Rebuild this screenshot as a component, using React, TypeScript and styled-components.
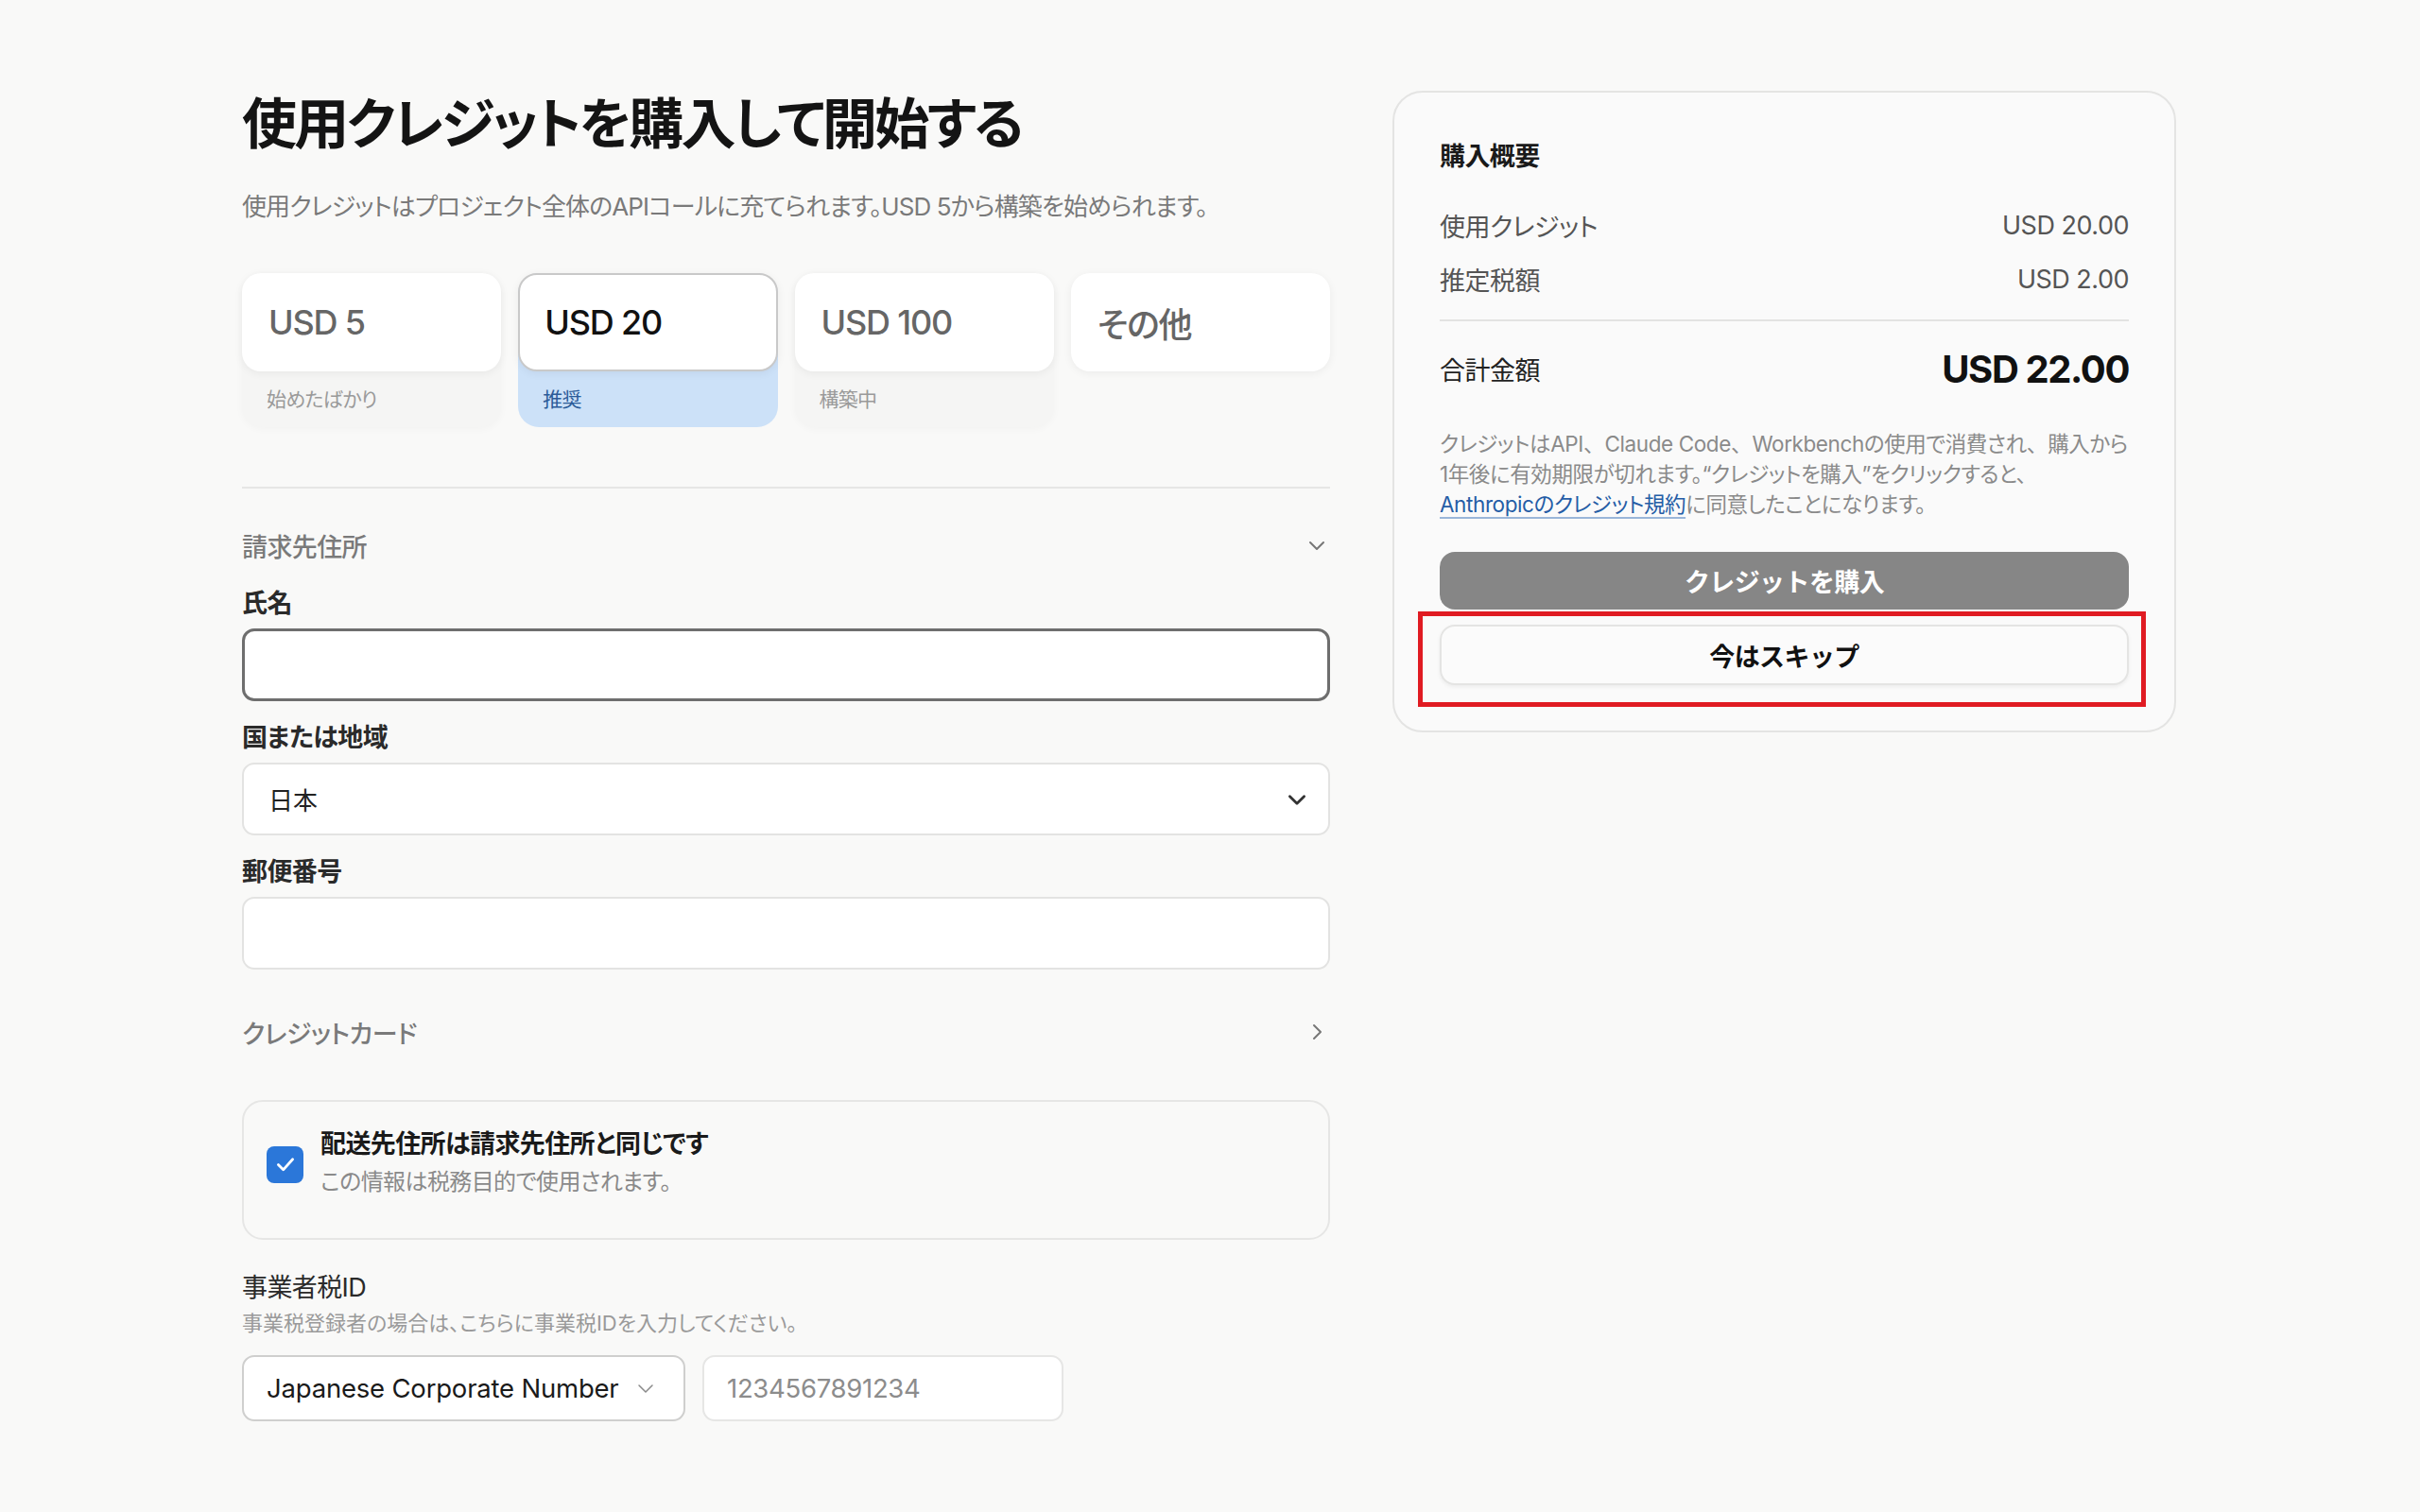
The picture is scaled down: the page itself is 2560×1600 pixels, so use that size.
import styled, { createGlobalStyle } from 'styled-components';

const GlobalStyle = createGlobalStyle`
	html, body {
		margin: 0;
		padding: 0;
		background: #f9f9f8;
	}
	body {
		font-family: Inter, "Noto Sans CJK JP", sans-serif;
		font-feature-settings: "palt";
		color: #1f1f1f;
	}
	* {
		box-sizing: border-box;
	}
`;

type Tier = {
	label: string;
	note?: string;
	selected?: boolean;
};

const tiers: Tier[] = [
	{ label: 'USD 5', note: '始めたばかり' },
	{ label: 'USD 20', note: '推奨', selected: true },
	{ label: 'USD 100', note: '構築中' },
	{ label: 'その他' },
];

const ChevronDown = ({ size = 22, color = '#777', width = 2 }: { size?: number; color?: string; width?: number }) => (
	<svg width={size} height={size} viewBox="0 0 24 24" fill="none">
		<polyline points="5,9 12,16 19,9" stroke={color} strokeWidth={width} strokeLinecap="round" strokeLinejoin="round" />
	</svg>
);

const ChevronRight = () => (
	<svg width={24} height={24} viewBox="0 0 24 24" fill="none">
		<polyline points="9,5 16,12 9,19" stroke="#777" strokeWidth={2} strokeLinecap="round" strokeLinejoin="round" />
	</svg>
);

const App = () => {
	return (
		<>
			<GlobalStyle />
			<Page>
				<Main>
					<Title>使用クレジットを購入して開始する</Title>
					<Subtitle>使用クレジットはプロジェクト全体のAPIコールに充てられます。USD 5から構築を始められます。</Subtitle>

					<TierGrid>
						{tiers.map(tier => (
							<TierTile key={tier.label} selected={tier.selected} empty={!tier.note}>
								<TierCard selected={tier.selected}>
									<TierLabel selected={tier.selected}>{tier.label}</TierLabel>
								</TierCard>
								{tier.note && <TierNote selected={tier.selected}>{tier.note}</TierNote>}
							</TierTile>
						))}
					</TierGrid>

					<Divider />

					<SectionRow>
						<SectionTitle>請求先住所</SectionTitle>
						<ChevronDown size={24} />
					</SectionRow>

					<FieldLabel>氏名</FieldLabel>
					<TextBox focused />

					<FieldLabel>国または地域</FieldLabel>
					<SelectBox>
						<span>日本</span>
						<ChevronDown size={26} color="#333" width={2.6} />
					</SelectBox>

					<FieldLabel>郵便番号</FieldLabel>
					<TextBox />

					<CardRow>
						<SectionTitle>クレジットカード</SectionTitle>
						<ChevronRight />
					</CardRow>

					<CheckCard>
						<CheckBox>
							<svg width={28} height={28} viewBox="0 0 24 24" fill="none">
								<polyline points="5.5,12.5 10,17 18.5,7.5" stroke="#fff" strokeWidth={2.4} strokeLinecap="round" strokeLinejoin="round" />
							</svg>
						</CheckBox>
						<CheckText>
							<CheckTitle>配送先住所は請求先住所と同じです</CheckTitle>
							<CheckNote>この情報は税務目的で使用されます。</CheckNote>
						</CheckText>
					</CheckCard>

					<TaxTitle>事業者税ID</TaxTitle>
					<TaxNote>事業税登録者の場合は、こちらに事業税IDを入力してください。</TaxNote>
					<TaxRow>
						<TaxSelect>
							<span>Japanese Corporate Number</span>
							<ChevronDown size={24} color="#8a8a8a" width={1.5} />
						</TaxSelect>
						<TaxInput>1234567891234</TaxInput>
					</TaxRow>
				</Main>

				<Summary>
					<SummaryTitle>購入概要</SummaryTitle>
					<SummaryLine>
						<span>使用クレジット</span>
						<span>USD 20.00</span>
					</SummaryLine>
					<SummaryLine tight>
						<span>推定税額</span>
						<span>USD 2.00</span>
					</SummaryLine>
					<SummaryDivider />
					<TotalLine>
						<span>合計金額</span>
						<TotalValue>USD 22.00</TotalValue>
					</TotalLine>
					<FinePrint>
						クレジットはAPI<Wide>、</Wide>Claude Code<Wide>、</Wide>Workbenchの使用で消費され<Wide>、</Wide>購入から
						<br />
						1年後に有効期限が切れます。“クレジットを購入”をクリックすると、
						<br />
						<TermsLink>Anthropicのクレジット規約</TermsLink>に同意したことになります。
					</FinePrint>
					<BuyButton>クレジットを購入</BuyButton>
					<SkipWrap>
						<SkipButton>今はスキップ</SkipButton>
						<Highlight />
					</SkipWrap>
				</Summary>
			</Page>
		</>
	);
};

const Page = styled.div`
	display: flex;
	align-items: flex-start;
	gap: 66px;
	padding: 96px 0 80px 256px;
	min-height: 1600px;
`;

const Main = styled.div`
	width: 1151px;
	display: flex;
	flex-direction: column;
`;

const Title = styled.h1`
	margin: 0;
	font-size: 58px;
	line-height: 70px;
	font-weight: 700;
	color: #141414;
	letter-spacing: -2.8px;
`;

const Subtitle = styled.p`
	margin: 33px 0 0;
	font-size: 26px;
	line-height: 40px;
	color: #7a7a7a;
	letter-spacing: -0.9px;
`;

const TierGrid = styled.div`
	display: grid;
	grid-template-columns: repeat(4, 1fr);
	gap: 18px;
	margin-top: 50px;
`;

const TierTile = styled.div<{ selected?: boolean; empty?: boolean }>`
	height: 163px;
	border-radius: 22px;
	background: ${({ selected, empty }) => (selected ? '#cce1f8' : empty ? 'transparent' : '#f5f5f4')};
	box-shadow: ${({ selected, empty }) => (selected || empty ? 'none' : '0 2px 8px rgba(0, 0, 0, 0.03)')};
	display: flex;
	flex-direction: column;
`;

const TierCard = styled.div<{ selected?: boolean }>`
	height: 104px;
	border-radius: 20px;
	background: #fff;
	border: ${({ selected }) => (selected ? '2px solid #c9c9c9' : '2px solid transparent')};
	box-shadow: 0 2px 10px rgba(0, 0, 0, 0.06);
	display: flex;
	align-items: center;
	padding: 0 26px;
`;

const TierLabel = styled.span<{ selected?: boolean }>`
	font-size: 36px;
	font-weight: 500;
	color: ${({ selected }) => (selected ? '#111' : '#666')};
	letter-spacing: -1.2px;
`;

const TierNote = styled.span<{ selected?: boolean }>`
	padding: 14px 26px 0;
	font-size: 21px;
	line-height: 32px;
	color: ${({ selected }) => (selected ? '#2b5b98' : '#9a9a9a')};
	letter-spacing: -0.8px;
`;

const Divider = styled.div`
	height: 2px;
	background: #e6e6e5;
	margin-top: 63px;
`;

const SectionRow = styled.div`
	display: flex;
	align-items: center;
	justify-content: space-between;
	height: 40px;
	margin-top: 40px;
	padding-right: 2px;
`;

const CardRow = styled(SectionRow)`
	margin-top: 46px;
`;

const FirstFieldGap = styled.div`
	height: 3px;
`;

const SectionTitle = styled.span`
	font-size: 27px;
	font-weight: 500;
	color: #7a7a7a;
	letter-spacing: -0.6px;
`;

const FieldLabel = styled.label`
	display: block;
	height: 40px;
	line-height: 40px;
	margin-top: 19px;
	font-size: 27px;
	font-weight: 700;
	color: #2a2a2a;
	letter-spacing: -0.6px;

	${SectionRow} + & {
		margin-top: 22px;
	}
`;

const TextBox = styled.div<{ focused?: boolean }>`
	height: 77px;
	margin-top: 6px;
	border-radius: 13px;
	background: #fff;
	border: ${({ focused }) => (focused ? '3px solid #6e6e6e' : '2px solid #e3e3e2')};
`;

const SelectBox = styled.div`
	height: 77px;
	margin-top: 6px;
	border-radius: 13px;
	background: #fff;
	border: 2px solid #e3e3e2;
	display: flex;
	align-items: center;
	justify-content: space-between;
	padding: 0 20px 0 26px;
	font-size: 26px;
	color: #222;
`;

const CheckCard = styled.div`
	margin-top: 52px;
	height: 148px;
	border-radius: 22px;
	border: 2px solid #e6e6e5;
	display: flex;
	align-items: center;
	gap: 18px;
	padding: 0 24px 14px;
`;

const CheckBox = styled.div`
	width: 39px;
	height: 39px;
	border-radius: 8px;
	background: #2b77d9;
	display: flex;
	align-items: center;
	justify-content: center;
	flex-shrink: 0;
	margin-top: 2px;
`;

const CheckText = styled.div`
	display: flex;
	flex-direction: column;
`;

const CheckTitle = styled.span`
	font-size: 27px;
	line-height: 40px;
	font-weight: 700;
	color: #1a1a1a;
	letter-spacing: -0.6px;
`;

const CheckNote = styled.span`
	font-size: 24px;
	line-height: 40px;
	color: #8a8a8a;
	letter-spacing: -0.6px;
`;

const TaxTitle = styled.span`
	margin-top: 31px;
	font-size: 27px;
	line-height: 40px;
	color: #2a2a2a;
	letter-spacing: -0.6px;
`;

const TaxNote = styled.span`
	font-size: 22px;
	line-height: 30px;
	color: #9a9a9a;
	margin-top: 2px;
`;

const TaxRow = styled.div`
	display: flex;
	gap: 18px;
	margin-top: 19px;
`;

const TaxSelect = styled.div`
	width: 469px;
	height: 70px;
	border-radius: 13px;
	background: #fff;
	border: 2px solid #cfcfce;
	display: flex;
	align-items: center;
	gap: 16px;
	padding: 0 24px;
	font-size: 27.5px;
	color: #1a1a1a;
	letter-spacing: -0.2px;
`;

const TaxInput = styled.div`
	width: 382px;
	height: 70px;
	border-radius: 13px;
	background: #fff;
	border: 2px solid #e6e6e5;
	display: flex;
	align-items: center;
	padding: 0 24px;
	font-size: 27.5px;
	color: #8c8c8c;
	letter-spacing: -0.3px;
`;

const Summary = styled.aside`
	width: 829px;
	border: 2px solid #e4e4e3;
	border-radius: 32px;
	background: #fafafa;
	padding: 48px 48px 48px 48px;
	display: flex;
	flex-direction: column;
`;

const SummaryTitle = styled.h2`
	margin: 0;
	font-size: 27px;
	line-height: 40px;
	font-weight: 700;
	color: #1a1a1a;
	letter-spacing: -0.6px;
`;

const SummaryLine = styled.div<{ tight?: boolean }>`
	display: flex;
	justify-content: space-between;
	align-items: center;
	height: 40px;
	margin-top: ${({ tight }) => (tight ? '17px' : '32px')};
	font-size: 27px;
	color: #555;
	letter-spacing: -0.5px;
`;

const SummaryDivider = styled.div`
	height: 2px;
	background: #e3e3e2;
	margin-top: 23px;
`;

const TotalLine = styled.div`
	display: flex;
	justify-content: space-between;
	align-items: center;
	height: 60px;
	margin-top: 20px;
	font-size: 27px;
	color: #222;
	letter-spacing: -0.5px;
`;

const TotalValue = styled.span`
	font-size: 40px;
	font-weight: 700;
	color: #111;
	letter-spacing: -1.4px;
`;

const FinePrint = styled.p`
	margin: 34px 0 0;
	font-size: 22.5px;
	line-height: 32px;
	color: #8a8a8a;
	letter-spacing: -0.4px;
	white-space: nowrap;
`;

const Wide = styled.span`
	font-feature-settings: normal;
	letter-spacing: 0;
`;

const TermsLink = styled.a`
	color: #255da6;
	text-decoration: underline;
	text-decoration-color: #9ab6d9;
	text-underline-offset: 5px;
`;

const BuyButton = styled.button`
	margin-top: 34px;
	height: 61px;
	border: none;
	border-radius: 16px;
	background: #868686;
	color: #fff;
	font-family: inherit;
	font-size: 27px;
	font-weight: 700;
	letter-spacing: -0.6px;
`;

const SkipWrap = styled.div`
	position: relative;
	margin-top: 16px;
	display: flex;
	flex-direction: column;
`;

const SkipButton = styled.button`
	height: 64px;
	border: 2px solid #e4e4e3;
	border-radius: 16px;
	background: #fbfbfb;
	box-shadow: 0 2px 4px rgba(0, 0, 0, 0.06);
	color: #111;
	font-family: inherit;
	font-size: 27px;
	font-weight: 700;
	letter-spacing: -0.6px;
`;

const Highlight = styled.div`
	position: absolute;
	left: -23px;
	right: -18px;
	top: -14px;
	bottom: -23px;
	border: 5px solid #e01b22;
	pointer-events: none;
`;

export default App;
